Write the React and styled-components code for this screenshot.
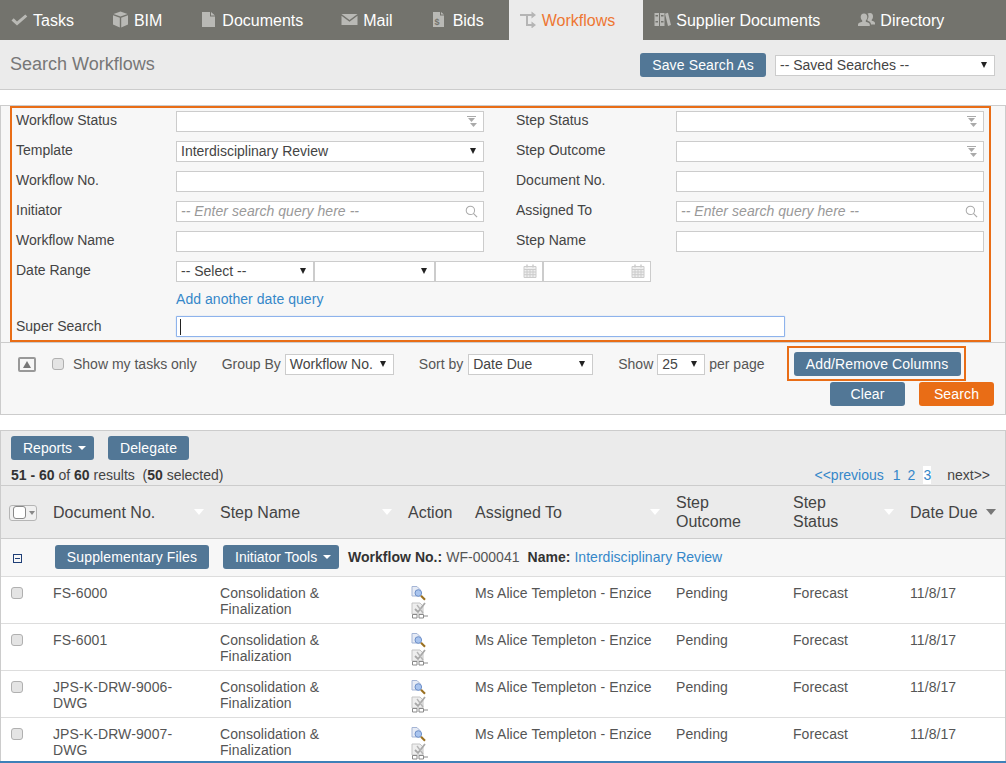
import React from 'react'
import styled, { createGlobalStyle } from 'styled-components'

const GlobalStyle = createGlobalStyle`
  html, body {
    margin: 0;
    padding: 0;
    background: #fff;
    overflow: hidden;
  }
  * {
    box-sizing: border-box;
  }
`

const Page = styled.div`
  width: 1006px;
  height: 763px;
  display: flex;
  flex-direction: column;
  overflow: hidden;
  font-family: 'Liberation Sans', Arial, sans-serif;
  font-size: 14px;
  color: #555;
`

/* top nav */
const Nav = styled.nav`
  height: 40px;
  flex: none;
  display: flex;
  background: #73736d;
`

const Tab = styled.a`
  display: flex;
  align-items: center;
  height: 40px;
  padding: 2px ${(p) => (p.$active ? 28 : 27)}px 0 11px;
  margin-left: ${(p) => (p.$active ? -2 : 0)}px;
  font-size: 16px;
  color: ${(p) => (p.$active ? '#ee7733' : '#fff')};
  background: ${(p) => (p.$active ? '#ebebeb' : 'transparent')};
`

const TabIcon = styled.svg`
  width: 17px;
  height: 17px;
  margin-right: 5px;
  margin-top: -4px;
  flex: none;
  fill: ${(p) => (p.$active ? '#b5b5b5' : '#b9b9b5')};
`

/* page header */
const Header = styled.header`
  height: 50px;
  flex: none;
  display: flex;
  align-items: center;
  padding: 0 11px 0 10px;
  background: #ebebeb;
  border-bottom: 1px solid #ccc;
`

const Title = styled.h1`
  margin: -1px auto 0 0;
  font-size: 18px;
  font-weight: 400;
  color: #777;
`

const Button = styled.button`
  height: ${(p) => p.$h || 24}px;
  width: ${(p) => (p.$w ? `${p.$w}px` : 'auto')};
  margin-left: ${(p) => p.$ml || 0}px;
  padding: ${(p) => (p.$menu ? '0 0 0 12px' : '0')};
  flex: none;
  display: inline-flex;
  align-items: center;
  justify-content: ${(p) => (p.$menu ? 'flex-start' : 'center')};
  gap: 6px;
  border: 0;
  border-radius: 3px;
  background: ${(p) => (p.$orange ? '#e96d16' : '#527796')};
  color: #fff;
  font: 14px 'Liberation Sans', Arial, sans-serif;
  letter-spacing: ${(p) => (p.$menu ? 0 : 0.14)}px;
  white-space: nowrap;
`

const Caret = styled.i`
  width: 0;
  height: 0;
  border-left: 4px solid transparent;
  border-right: 4px solid transparent;
  border-top: 4px solid #fff;
`

const HeaderActions = styled.div`
  display: flex;
  align-items: center;
  gap: 9px;
  margin-top: 1px;
`

/* search panel */
const SearchPanel = styled.section`
  margin-top: 15px;
  height: 310px;
  flex: none;
  background: #f7f7f7;
  border: 1px solid #ccc;
`

const Highlight = styled.div`
  margin: 0 14px 0 9px;
  height: 236px;
  padding: 3px 0 0 4px;
  border: 2px solid #e96d16;
`

const FormGrid = styled.div`
  display: grid;
  grid-template-columns: 160px 308px 32px 160px 308px;
  grid-auto-rows: auto;
  row-gap: 9px;
`

const Label = styled.label`
  grid-column: ${(p) => p.$col || 'auto'};
  height: 21px;
  padding-top: ${(p) => p.$pt || 0}px;
  line-height: 18px;
  color: #444;
`

const Field = styled.div`
  height: 21px;
  width: ${(p) => (p.$w ? `${p.$w}px` : 'auto')};
  flex: ${(p) => (p.$w ? 'none' : '1')};
  grid-column: ${(p) => p.$col || 'auto'};
  display: flex;
  align-items: center;
  justify-content: space-between;
  padding: 0 5px 1px 4px;
  background: #fff;
  border: 1px solid #ccc;
  color: #444;
  white-space: nowrap;
  line-height: 16px;
`

const Placeholder = styled.span`
  font-style: italic;
  color: #999;
  letter-spacing: 0.05px;
`

const Triangle = styled.i`
  flex: none;
  width: 0;
  height: 0;
  margin-right: 2px;
  border-left: 3.5px solid transparent;
  border-right: 3.5px solid transparent;
  border-top: 6px solid #222;
`

const MultiIcon = styled.svg`
  width: 12px;
  height: 12px;
  flex: none;
  fill: #aaa;
`

const SmallIcon = styled.svg`
  width: ${(p) => p.$size || 14}px;
  height: ${(p) => p.$size || 14}px;
  flex: none;
`

const DateRow = styled.div`
  grid-column: 2 / -1;
  display: flex;
`

const Link = styled.a`
  color: ${(p) => p.$color || '#3587c9'};
`

const LinkRow = styled.div`
  grid-column: 2 / -1;
  height: 16px;
  line-height: 16px;
  letter-spacing: 0.05px;
`

const SuperRow = styled.div`
  grid-column: 2 / -1;
`

const SuperField = styled.div`
  width: 609px;
  height: 21px;
  display: flex;
  align-items: center;
  padding-left: 3px;
  background: #fff;
  border: 1px solid #8eb3ec;
  box-shadow: 0 0 1px #8eb3ec;
  border-radius: 1px;
`

const TextCaret = styled.span`
  width: 1px;
  height: 16px;
  background: #222;
`

const Toolbar = styled.div`
  height: 71px;
  border-top: 1px solid #ccc;
  padding-top: 3px;
`

const ToolRow = styled.div`
  display: flex;
  align-items: center;
  height: 36px;
  padding-left: 17px;
`

const Toggle = styled.span`
  width: 18px;
  height: 15px;
  display: flex;
  align-items: center;
  justify-content: center;
  border: 2px solid #999;
  border-radius: 2px;
  &::after {
    content: '';
    border-left: 4px solid transparent;
    border-right: 4px solid transparent;
    border-bottom: 7px solid #777;
  }
`

const Check = styled.span`
  display: block;
  flex: none;
  width: 12px;
  height: 12px;
  background: #e4e4e4;
  border: 1px solid #b0b0b0;
  border-radius: 3px;
`

const ToolGroup = styled.div`
  display: flex;
  align-items: center;
  gap: ${(p) => p.$gap || 4}px;
  margin-left: ${(p) => p.$ml || 25}px;
`

const ColumnsBox = styled.div`
  margin-left: 22px;
  align-self: flex-start;
  width: 179px;
  height: 35px;
  display: flex;
  align-items: center;
  justify-content: flex-end;
  padding-right: 3px;
  border: 2px solid #e96d16;
`

const ActionRow = styled.div`
  display: flex;
  justify-content: flex-end;
  gap: 14px;
  padding-right: 11px;
`

/* results */
const Results = styled.section`
  margin-top: 15px;
  flex: 1;
  min-height: 0;
  overflow: hidden;
  background: #fff;
  border: 1px solid #ccc;
  border-bottom: 0;
`

const ResultsTop = styled.div`
  height: 55px;
  padding: 5px 0 0 10px;
  background: #ebebeb;
  border-bottom: 1px solid #ccc;
`

const ResultActions = styled.div`
  display: flex;
  gap: 14px;
`

const Summary = styled.div`
  display: flex;
  justify-content: space-between;
  margin-top: 6px;
  padding-right: 15px;
  line-height: 18px;
  color: #444;
  b {
    color: #333;
  }
`

const Pager = styled.div`
  display: flex;
`

const PageNum = styled.a`
  color: #3587c9;
  margin-left: ${(p) => p.$ml}px;
  background: ${(p) => (p.$current ? '#fff' : 'transparent')};
`

const NextLink = styled.span`
  margin-left: 16px;
`

const columns = '52px 167px 188px 67px 201px 117px 117px 95px'

const HeadRow = styled.div`
  display: grid;
  grid-template-columns: ${columns};
  height: 53px;
  background: #ebebeb;
  border-bottom: 1px solid #ccc;
  font-size: 16px;
  line-height: 19px;
  color: #444;
`

const HeadCell = styled.div`
  display: flex;
  align-items: center;
  justify-content: ${(p) => (p.$tight ? 'flex-start' : 'space-between')};
  gap: 8px;
  padding-right: ${(p) => (p.$tight ? 0 : 16)}px;
`

const SortArrow = styled.i`
  flex: none;
  width: 0;
  height: 0;
  border-left: 5.5px solid transparent;
  border-right: 5.5px solid transparent;
  border-top: 6px solid ${(p) => (p.$on ? '#777' : '#fff')};
`

const CheckMenu = styled.div`
  margin: 1px 0 0 8px;
  width: 28px;
  height: 16px;
  display: flex;
  align-items: center;
  gap: 3px;
  padding-left: 3px;
  background: #f0f0f0;
  border: 1px solid #b5b5b5;
  border-radius: 3px;
  &::before {
    content: '';
    width: 11px;
    height: 11px;
    background: #fff;
    border: 1px solid #888;
    border-radius: 3px;
  }
  &::after {
    content: '';
    border-left: 3.5px solid transparent;
    border-right: 3.5px solid transparent;
    border-top: 4px solid #888;
  }
`

const GroupRow = styled.div`
  height: 38px;
  display: flex;
  align-items: center;
  padding-bottom: 1px;
  background: #f7f7f7;
  border-bottom: 1px solid #ddd;
  color: #555;
  b {
    color: #333;
  }
`

const Collapse = styled.span`
  width: 9px;
  height: 9px;
  margin: 2px 33px 0 12px;
  flex: none;
  display: flex;
  align-items: center;
  justify-content: center;
  border: 1px solid #1f3f77;
  &::after {
    content: '';
    width: 5px;
    height: 1px;
    background: #1f3f77;
  }
`

const GroupInfo = styled.div`
  margin-left: 9px;
  display: flex;
  gap: 8px;
  letter-spacing: 0.03px;
`

const Row = styled.div`
  display: grid;
  grid-template-columns: ${columns};
  height: 47px;
  flex: none;
  padding-top: 8px;
  line-height: 16px;
  letter-spacing: 0.07px;
  background: #fff;
  border-bottom: 1px solid #ddd;
  color: #555;
`

const DocCell = styled.div`
  padding-right: 14px;
  letter-spacing: 0.1px;
`

const RowCheck = styled.div`
  padding: 2px 0 0 10px;
`

const ActionCell = styled.div`
  display: flex;
  flex-direction: column;
  align-items: flex-start;
  gap: 1px;
  padding: 1px 0 0 3px;
`

const BottomLine = styled.div`
  height: 2px;
  flex: none;
  background: #3d80b8;
`

const CheckIcon = () => (
  <TabIcon viewBox="0 0 17 17">
    <path d="M0.500 9.500l2.200-2.200 3.300 3.200L14.300 3.500 16.300 5.500 6 14.500z" />
  </TabIcon>
)

const CubeIcon = () => (
  <TabIcon viewBox="0 0 17 17">
    <path d="M8.500 0.500l7 2.400-7 2.600-7-2.600zM1 4.200l6.800 2.500v9.800L1 13.600zM16 4.200L9.200 6.700v9.800l6.800-2.900z" />
  </TabIcon>
)

const FileIcon = () => (
  <TabIcon viewBox="0 0 17 17">
    <path d="M2 1h8v4.500h5V16H2zM11 1l4 3.500h-4z" />
  </TabIcon>
)

const MailIcon = () => (
  <TabIcon viewBox="0 0 17 17">
    <path d="M0.500 3h16L8.500 9zM0.500 4.800l8 6 8-6V14h-16z" />
  </TabIcon>
)

const BidIcon = () => (
  <TabIcon viewBox="0 0 17 17">
    <path d="M2 1h7v3.500h4V16H2zM10 1l3 2.500h-3z" />
    <text x="3.500" y="14" fontSize="9" fontWeight="700" fill="#73736d" fontFamily="Liberation Sans">$</text>
  </TabIcon>
)

const FlowIcon = () => (
  <TabIcon $active viewBox="0 0 17 17">
    <path d="M0 3h11.500V0.500L16 4l-4.500 3.500V5H8v8h3.500v-2.500L16 14l-4.500 3.500V15H6V5H0z" />
  </TabIcon>
)

const BooksIcon = () => (
  <TabIcon viewBox="0 0 17 17">
    <path
      fillRule="evenodd"
      d="M0.500 2h4.500v13H0.500zM1.500 4v1.500H4V4zM1.500 10v1.500H4V10zM6 2h4.500v13H6zM7 4v1.500h2.500V4zM7 10v1.500h2.500V10zM11 2.700l3-0.900L17 14l-3 .9z"
    />
  </TabIcon>
)

const PeopleIcon = () => (
  <TabIcon viewBox="0 0 17 17">
    <path d="M12 2c2 0 3 1.500 3 3.500 0 1.500-.6 2.600-1.300 3.200v1c1.500.4 3.300 1 3.300 2.300v1.500h-4c0-2-1.500-3-3.500-3.700v-1.600c.7-.7 1-1.600 1-2.700 0-1.500-.3-2.500-1-3C10 2.200 11 2 12 2z" />
    <path d="M6 2.500c2.200 0 3.300 1.500 3.300 3.600 0 1.500-.6 2.800-1.500 3.400v1.300c2 .5 4 1.200 4 2.700V15H0v-1.500c0-1.500 2.100-2.200 4.200-2.700V9.500C3.300 8.900 2.700 7.600 2.700 6.100 2.700 4 3.800 2.500 6 2.500z" />
  </TabIcon>
)

const MultiSelectMark = () => (
  <MultiIcon viewBox="0 0 12 12">
    <path d="M1 1h9v1H1zM2 3h7L5.500 7zM4 8h7L7.500 12z" />
  </MultiIcon>
)

const SearchMark = () => (
  <SmallIcon viewBox="0 0 14 14" $size={13}>
    <circle cx="5.800" cy="5.800" r="4.500" fill="none" stroke="#aaa" strokeWidth="1.100" />
    <path d="M9 9l4 4" stroke="#aaa" strokeWidth="1.300" />
  </SmallIcon>
)

const CalendarMark = () => (
  <SmallIcon viewBox="0 0 14 14">
    <path
      d="M1 2.500h12v11H1zM1 5.500h12M1 8h12M1 10.700h12M4 5.500v8M7 5.500v8M10 5.500v8"
      fill="#eee"
      stroke="#ccc"
    />
    <path d="M4 .5v3M10 .5v3" stroke="#ccc" strokeWidth="1.500" />
  </SmallIcon>
)

const ViewMark = () => (
  <SmallIcon viewBox="0 0 15 15" $size={15}>
    <path d="M1 0.500h5l3 3V10H1z" fill="#e6ebf5" stroke="#a5b5d5" />
    <circle cx="7.300" cy="7" r="3.300" fill="#a9c4ee" stroke="#6d8fc8" />
    <path d="M10 9.700l4 4" stroke="#9a7020" strokeWidth="2.200" />
  </SmallIcon>
)

const ReassignMark = () => (
  <SmallIcon viewBox="0 0 17 17" $size={17}>
    <path d="M1 1h8l3 3v8H1z" fill="#eee" stroke="#c4c4c4" />
    <path d="M4 7l3 3 7-9" fill="none" stroke="#a8a8a8" strokeWidth="1.800" />
    <path d="M6 3l6 8" stroke="#b5b5b5" strokeWidth="1.400" />
    <path d="M1.500 12.500h4.500v3.500H1.500zM8 12.500h4.500v3.500H8zM12.500 14H17" fill="#fff" stroke="#8a8a8a" />
  </SmallIcon>
)

const tabs = [
  { label: 'Tasks', Icon: CheckIcon },
  { label: 'BIM', Icon: CubeIcon },
  { label: 'Documents', Icon: FileIcon },
  { label: 'Mail', Icon: MailIcon },
  { label: 'Bids', Icon: BidIcon },
  { label: 'Workflows', Icon: FlowIcon, active: true },
  { label: 'Supplier Documents', Icon: BooksIcon },
  { label: 'Directory', Icon: PeopleIcon },
]

const rows = [
  { doc: 'FS-6000' },
  { doc: 'FS-6001' },
  { doc: 'JPS-K-DRW-9006-DWG' },
  { doc: 'JPS-K-DRW-9007-DWG' },
]

const App = () => (
  <Page>
    <GlobalStyle />
    <Nav>
      {tabs.map(({ label, Icon, active }) => (
        <Tab key={label} $active={active}>
          <Icon />
          {label}
        </Tab>
      ))}
    </Nav>

    <Header>
      <Title>Search Workflows</Title>
      <HeaderActions>
        <Button $w={126}>Save Search As</Button>
        <Field $w={220}>
          -- Saved Searches --
          <Triangle />
        </Field>
      </HeaderActions>
    </Header>

    <SearchPanel>
      <Highlight>
        <FormGrid>
          <Label>Workflow Status</Label>
          <Field>
            <span />
            <MultiSelectMark />
          </Field>
          <Label $col="4">Step Status</Label>
          <Field>
            <span />
            <MultiSelectMark />
          </Field>

          <Label>Template</Label>
          <Field>
            Interdisciplinary Review
            <Triangle />
          </Field>
          <Label $col="4">Step Outcome</Label>
          <Field>
            <span />
            <MultiSelectMark />
          </Field>

          <Label>Workflow No.</Label>
          <Field />
          <Label $col="4">Document No.</Label>
          <Field />

          <Label>Initiator</Label>
          <Field>
            <Placeholder>-- Enter search query here --</Placeholder>
            <SearchMark />
          </Field>
          <Label $col="4">Assigned To</Label>
          <Field>
            <Placeholder>-- Enter search query here --</Placeholder>
            <SearchMark />
          </Field>

          <Label>Workflow Name</Label>
          <Field />
          <Label $col="4">Step Name</Label>
          <Field />

          <Label>Date Range</Label>
          <DateRow>
            <Field $w={138}>
              -- Select --
              <Triangle />
            </Field>
            <Field $w={121}>
              <span />
              <Triangle />
            </Field>
            <Field $w={108}>
              <span />
              <CalendarMark />
            </Field>
            <Field $w={108}>
              <span />
              <CalendarMark />
            </Field>
          </DateRow>

          <LinkRow>
            <Link>Add another date query</Link>
          </LinkRow>

          <Label $pt={1}>Super Search</Label>
          <SuperRow>
            <SuperField>
              <TextCaret />
            </SuperField>
          </SuperRow>
        </FormGrid>
      </Highlight>

      <Toolbar>
        <ToolRow>
          <Toggle />
          <ToolGroup $ml={16} $gap={9}>
            <Check />
            Show my tasks only
          </ToolGroup>
          <ToolGroup>
            Group By
            <Field $w={109}>
              Workflow No.
              <Triangle />
            </Field>
          </ToolGroup>
          <ToolGroup $gap={5}>
            Sort by
            <Field $w={125}>
              Date Due
              <Triangle />
            </Field>
          </ToolGroup>
          <ToolGroup>
            Show
            <Field $w={48}>
              25
              <Triangle />
            </Field>
            per page
          </ToolGroup>
          <ColumnsBox>
            <Button $w={167}>Add/Remove Columns</Button>
          </ColumnsBox>
        </ToolRow>
        <ActionRow>
          <Button $w={75}>Clear</Button>
          <Button $w={75} $orange>Search</Button>
        </ActionRow>
      </Toolbar>
    </SearchPanel>

    <Results>
      <ResultsTop>
        <ResultActions>
          <Button $w={83} $menu>
            Reports
            <Caret />
          </Button>
          <Button $w={81}>Delegate</Button>
        </ResultActions>
        <Summary>
          <span>
            <b>51 - 60</b> of <b>60</b> results &nbsp;(<b>50</b> selected)
          </span>
          <Pager>
            <Link>&lt;&lt;previous</Link>
            <PageNum $ml={9}>1</PageNum>
            <PageNum $ml={7}>2</PageNum>
            <PageNum $ml={8} $current>3</PageNum>
            <NextLink>next&gt;&gt;</NextLink>
          </Pager>
        </Summary>
      </ResultsTop>

      <HeadRow>
        <HeadCell $tight>
          <CheckMenu />
        </HeadCell>
        <HeadCell>
          Document No.
          <SortArrow />
        </HeadCell>
        <HeadCell>
          Step Name
          <SortArrow />
        </HeadCell>
        <HeadCell $tight>Action</HeadCell>
        <HeadCell>
          Assigned To
          <SortArrow />
        </HeadCell>
        <HeadCell $tight>
          Step
          <br />
          Outcome
        </HeadCell>
        <HeadCell>
          <span>
            Step
            <br />
            Status
          </span>
          <SortArrow />
        </HeadCell>
        <HeadCell $tight>
          Date Due
          <SortArrow $on />
        </HeadCell>
      </HeadRow>

      <GroupRow>
        <Collapse />
        <Button $w={154}>Supplementary Files</Button>
        <Button $w={116} $ml={14} $menu>
          Initiator Tools
          <Caret />
        </Button>
        <GroupInfo>
          <span>
            <b>Workflow No.:</b> WF-000041
          </span>
          <span>
            <b>Name:</b> <Link>Interdisciplinary Review</Link>
          </span>
        </GroupInfo>
      </GroupRow>

      {rows.map((row) => (
        <Row key={row.doc}>
          <RowCheck>
            <Check />
          </RowCheck>
          <DocCell>{row.doc}</DocCell>
          <div>
            Consolidation &amp;
            <br />
            Finalization
          </div>
          <ActionCell>
            <ViewMark />
            <ReassignMark />
          </ActionCell>
          <div>Ms Alice Templeton - Enzice</div>
          <div>Pending</div>
          <div>Forecast</div>
          <div>11/8/17</div>
        </Row>
      ))}
    </Results>
    <BottomLine />
  </Page>
)

export default App
